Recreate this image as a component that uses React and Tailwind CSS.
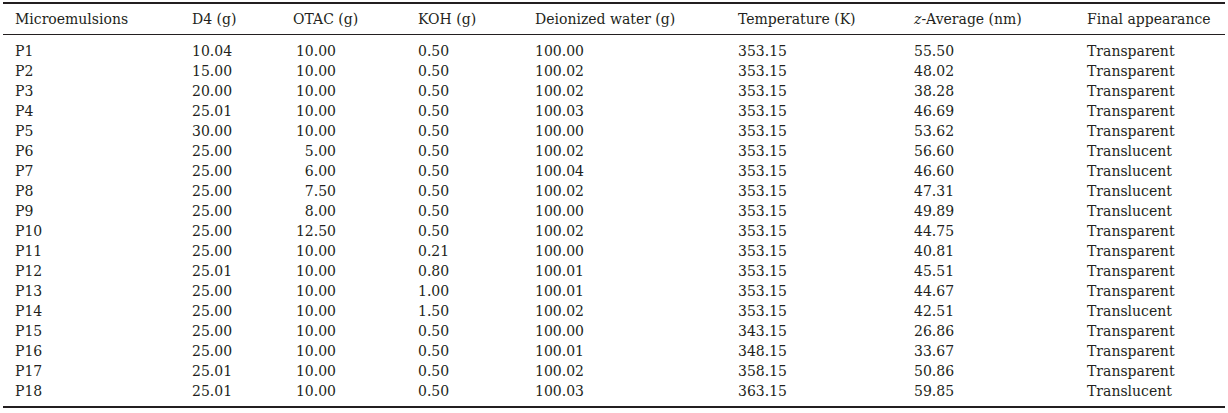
import React from "react";

const rows = [
  ["P1", "10.04", "10.00", "0.50", "100.00", "353.15", "55.50", "Transparent"],
  ["P2", "15.00", "10.00", "0.50", "100.02", "353.15", "48.02", "Transparent"],
  ["P3", "20.00", "10.00", "0.50", "100.02", "353.15", "38.28", "Transparent"],
  ["P4", "25.01", "10.00", "0.50", "100.03", "353.15", "46.69", "Transparent"],
  ["P5", "30.00", "10.00", "0.50", "100.00", "353.15", "53.62", "Transparent"],
  ["P6", "25.00", "5.00", "0.50", "100.02", "353.15", "56.60", "Translucent"],
  ["P7", "25.00", "6.00", "0.50", "100.04", "353.15", "46.60", "Translucent"],
  ["P8", "25.00", "7.50", "0.50", "100.02", "353.15", "47.31", "Translucent"],
  ["P9", "25.00", "8.00", "0.50", "100.00", "353.15", "49.89", "Translucent"],
  ["P10", "25.00", "12.50", "0.50", "100.02", "353.15", "44.75", "Transparent"],
  ["P11", "25.00", "10.00", "0.21", "100.00", "353.15", "40.81", "Transparent"],
  ["P12", "25.01", "10.00", "0.80", "100.01", "353.15", "45.51", "Transparent"],
  ["P13", "25.00", "10.00", "1.00", "100.01", "353.15", "44.67", "Transparent"],
  ["P14", "25.00", "10.00", "1.50", "100.02", "353.15", "42.51", "Translucent"],
  ["P15", "25.00", "10.00", "0.50", "100.00", "343.15", "26.86", "Transparent"],
  ["P16", "25.00", "10.00", "0.50", "100.01", "348.15", "33.67", "Transparent"],
  ["P17", "25.01", "10.00", "0.50", "100.02", "358.15", "50.86", "Transparent"],
  ["P18", "25.01", "10.00", "0.50", "100.03", "363.15", "59.85", "Translucent"],
];

const cols = "grid grid-cols-[177px_101px_125px_117px_203px_176px_173px_1fr]";

export default function App() {
  return (
    <div className="w-[1228px] h-[413px] bg-white pt-[2px] px-[3px] text-[#231f20] text-[14px] font-['DejaVu_Serif',serif]">
      <div className="border-t-2 border-b-2 border-[#231f20]">
        <div className={`${cols} h-[31px] items-center pl-[12px] pt-[1px] border-b-[1.5px] border-[#231f20]`}>
          <div>Microemulsions</div>
          <div>D4 (g)</div>
          <div>OTAC (g)</div>
          <div>KOH (g)</div>
          <div>Deionized water (g)</div>
          <div>Temperature (K)</div>
          <div><i>z</i>-Average (nm)</div>
          <div>Final appearance</div>
        </div>
        <div className="pt-[5px] pb-[6px]">
          {rows.map((r) => (
            <div key={r[0]} className={`${cols} h-[20px] items-center pl-[12px] pt-[1px]`}>
              <div>{r[0]}</div>
              <div>{r[1]}</div>
              <div><span className="inline-block w-[43px] text-right">{r[2]}</span></div>
              <div>{r[3]}</div>
              <div>{r[4]}</div>
              <div>{r[5]}</div>
              <div>{r[6]}</div>
              <div>{r[7]}</div>
            </div>
          ))}
        </div>
      </div>
    </div>
  );
}
